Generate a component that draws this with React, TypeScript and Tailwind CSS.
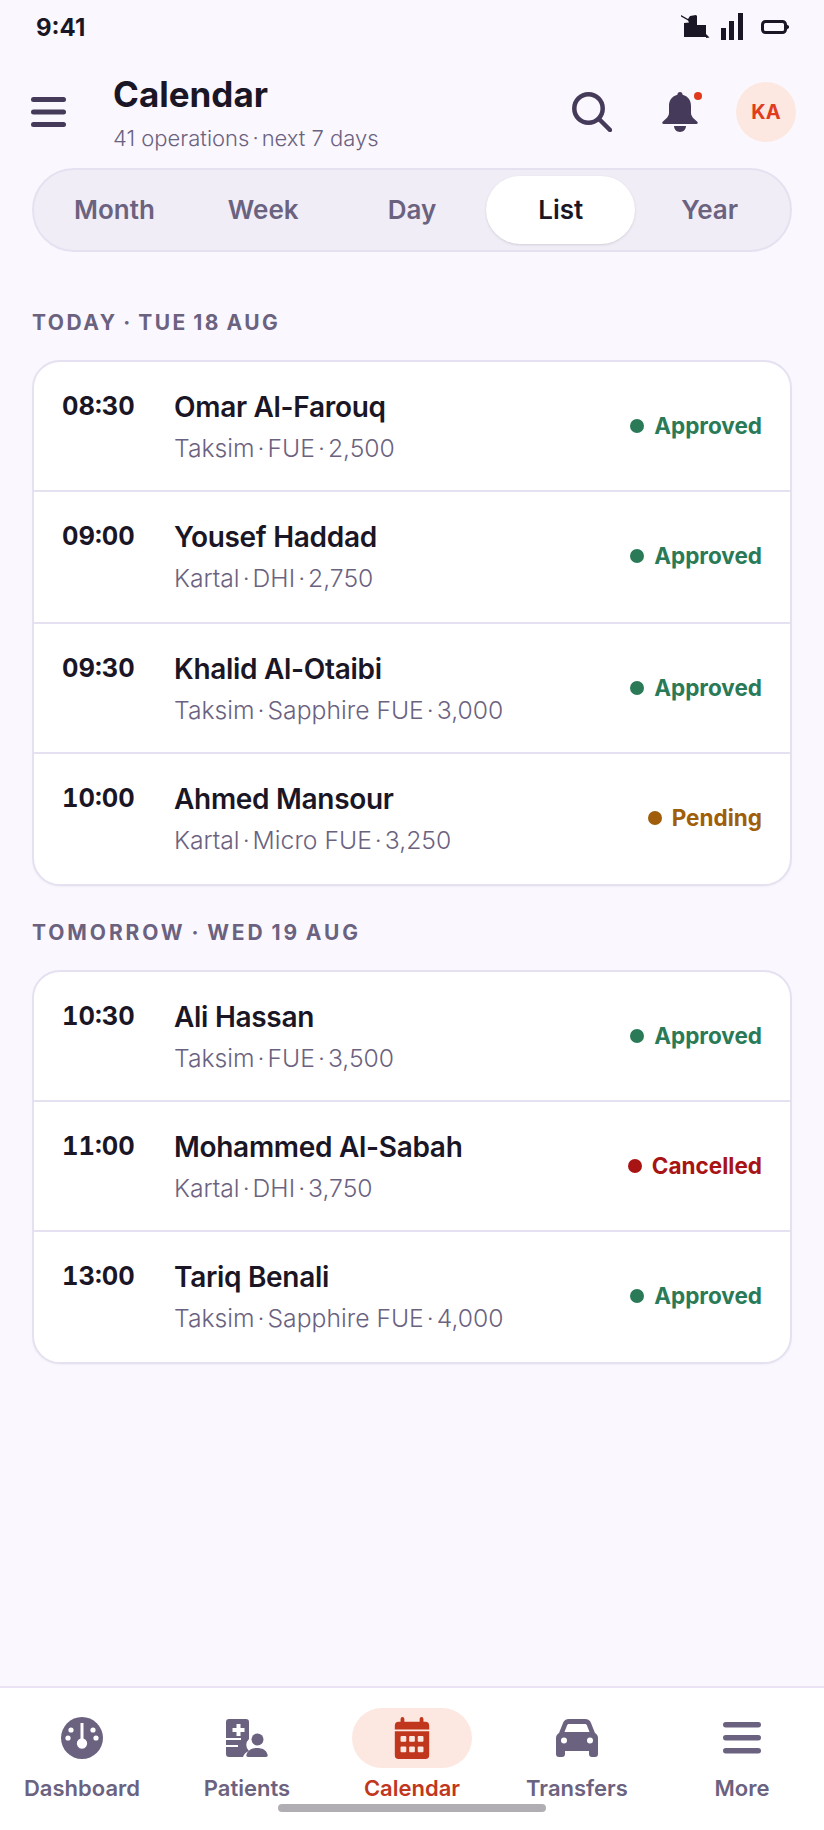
import { Fragment } from "react";

const font = { fontFamily: "Inter, sans-serif" };

type Status = "Approved" | "Pending" | "Cancelled";

const statusStyles: Record<Status, { text: string; dot: string }> = {
  Approved: { text: "text-[#2a7a57]", dot: "bg-[#2a7a57]" },
  Pending: { text: "text-[#a05e0a]", dot: "bg-[#a05e0a]" },
  Cancelled: { text: "text-[#a81313]", dot: "bg-[#a81313]" },
};

const today: { time: string; name: string; sub: string[]; status: Status }[] = [
  { time: "08:30", name: "Omar Al-Farouq", sub: ["Taksim", "FUE", "2,500"], status: "Approved" },
  { time: "09:00", name: "Yousef Haddad", sub: ["Kartal", "DHI", "2,750"], status: "Approved" },
  { time: "09:30", name: "Khalid Al-Otaibi", sub: ["Taksim", "Sapphire FUE", "3,000"], status: "Approved" },
  { time: "10:00", name: "Ahmed Mansour", sub: ["Kartal", "Micro FUE", "3,250"], status: "Pending" },
];

const tomorrow: typeof today = [
  { time: "10:30", name: "Ali Hassan", sub: ["Taksim", "FUE", "3,500"], status: "Approved" },
  { time: "11:00", name: "Mohammed Al-Sabah", sub: ["Kartal", "DHI", "3,750"], status: "Cancelled" },
  { time: "13:00", name: "Tariq Benali", sub: ["Taksim", "Sapphire FUE", "4,000"], status: "Approved" },
];

function StatusIcons() {
  return (
    <div className="flex items-center gap-[11px]">
      <svg width="30" height="26" viewBox="0 0 30 26" className="text-[#1a1625]">
        <path fill="currentColor" d="M1 1l7 4 2-3 6-1 1 1v9h9v12H4V9l5-.5-1-2-7-4z" />
        <path fill="currentColor" d="M26 20l3.500 3.500-3.500.5z" />
      </svg>
      <svg width="22" height="28" viewBox="0 0 22 28" className="text-[#1a1625]">
        <rect x="0" y="15" width="5" height="12" fill="currentColor" />
        <rect x="8" y="8" width="5" height="19" fill="currentColor" />
        <rect x="17" y="0" width="5" height="27" fill="currentColor" />
      </svg>
      <svg width="28" height="14" viewBox="0 0 28 14" className="ml-[7px] text-[#1a1625]">
        <rect x="1.500" y="1.500" width="23" height="11" rx="3" fill="none" stroke="currentColor" strokeWidth="3" />
        <path fill="currentColor" d="M25 4l3 2v2l-3 2z" />
      </svg>
    </div>
  );
}

function Dotted({ parts }: { parts: string[] }) {
  return (
    <>
      {parts.map((p, i) => (
        <Fragment key={p}>
          {i > 0 && <span className="mx-[3px]">·</span>}
          {p}
        </Fragment>
      ))}
    </>
  );
}

function Section({ title, tracking, rows, heights }: { title: string; tracking: string; rows: typeof today; heights: string[] }) {
  return (
    <section>
      <h2 className={`pt-[1px] text-[21px] leading-[27px] font-bold [word-spacing:-2px] text-[#6b6280] ${tracking}`}>{title}</h2>
      <div className="mt-[24px] overflow-hidden rounded-[28px] border-2 border-[#e6e1f0] bg-white shadow-[0_1px_2px_rgba(80,60,120,0.06)]">
        {rows.map((row, i) => (
          <div
            key={row.time}
            className={`flex items-start border-[#e6e1f0] px-[28px] ${heights[i]} ${i < rows.length - 1 ? "border-b-2" : ""}`}
          >
            <div className="mt-[28px] w-[112px] text-[25.500px] leading-[32px] font-bold tabular-nums text-[#1a1625]">{row.time}</div>
            <div className="mt-[27px] flex-1">
              <div className="text-[28px] leading-[36px] font-semibold tracking-[-0.3px] text-[#1a1625]">{row.name}</div>
              <div className="mt-[7px] text-[24.700px] leading-[32px] font-light text-[#6b6280]">
                <Dotted parts={row.sub} />
              </div>
            </div>
            <div className={`mt-[50px] flex items-center gap-[10px] text-[22.500px] leading-[28px] font-bold ${statusStyles[row.status].text}`}>
              <span className={`h-[14px] w-[14px] rounded-full ${statusStyles[row.status].dot}`} />
              {row.status}
            </div>
          </div>
        ))}
      </div>
    </section>
  );
}

function NavItem({ label, active, children }: { label: string; active?: boolean; children: React.ReactNode }) {
  return (
    <div className="flex w-[148px] flex-col items-center">
      <div className={`flex h-[60px] w-[120px] items-center justify-center rounded-full ${active ? "bg-[#fce8e1]" : ""}`}>
        {children}
      </div>
      <div className={`mt-[6px] text-[22px] leading-[28px] font-semibold ${active ? "text-[#c1371d]" : "text-[#6b6280]"}`}>{label}</div>
    </div>
  );
}

export default function App() {
  return (
    <div style={font} className="relative flex h-[1830px] w-[824px] flex-col overflow-hidden bg-[#faf8fe]">
      <div className="flex h-[54px] items-center justify-between pr-[35px] pl-[36px]">
        <span className="mt-[1px] text-[24px] font-bold text-[#1a1625]">9:41</span>
        <StatusIcons />
      </div>

      <header className="flex h-[114px] items-start pr-[28px] pl-[31px]">
        <svg viewBox="0 0 35 30" className="mt-[43px] h-[30px] w-[35px] text-[#453a5a]" fill="currentColor">
          <rect x="0" y="0" width="35" height="5" rx="2.500" />
          <rect x="0" y="12.500" width="35" height="5" rx="2.500" />
          <rect x="0" y="25" width="35" height="5" rx="2.500" />
        </svg>
        <div className="ml-[47px] flex-1">
          <h1 className="mt-[20px] text-[35px] leading-[40px] font-bold text-[#1a1625]">Calendar</h1>
          <p className="mt-[9px] text-[22px] leading-[30px] font-light text-[#6b6280]">
            <Dotted parts={["41 operations", "next 7 days"]} />
          </p>
        </div>
        <svg viewBox="0 0 40 40" className="mt-[38px] h-[40px] w-[40px] text-[#453a5a]" fill="none" stroke="currentColor">
          <circle cx="16.500" cy="16.500" r="14.200" strokeWidth="4.500" />
          <path d="M27.500 27.500L38 38" strokeWidth="4.500" strokeLinecap="round" />
        </svg>
        <div className="relative mt-[38px] ml-[50px] h-[40px] w-[36px]">
          <svg viewBox="0 0 36 40" className="h-[40px] w-[36px] text-[#453a5a]" fill="currentColor">
            <path d="M18 0c1.600 0 2.600 1.200 2.600 2.800C26 4.200 29 8.500 29 14v7c0 3 2 5 6.500 9 .5 1 0 2-1 2H1.500c-1 0-1.500-1-1-2C5 26 7 24 7 21v-7c0-5.500 3-9.800 8.400-11.200C15.400 1.200 16.400 0 18 0zM12 34h12c0 3-2.500 6-6 6s-6-3-6-6z" />
          </svg>
          <span className="absolute top-0 right-[-4px] h-[8px] w-[8px] rounded-full bg-[#e0391c]" />
        </div>
        <div className="mt-[28px] ml-[38px] flex h-[60px] w-[60px] items-center justify-center rounded-full bg-[#fce8e1] text-[20px] font-bold text-[#df3c20]">
          KA
        </div>
      </header>

      <div className="mx-[32px] grid h-[84px] grid-cols-5 items-center rounded-full border-2 border-[#e6e1f0] bg-[#f0edf7] px-[6px]">
        {["Month", "Week", "Day", "List", "Year"].map((t) => (
          <div
            key={t}
            className={`flex h-[68px] items-center justify-center rounded-full pb-[2px] text-[26px] font-semibold ${t === "List" ? "bg-white text-[#1a1625] shadow-sm" : "text-[#6b6280]"}`}
          >
            {t}
          </div>
        ))}
      </div>

      <main className="mt-[56px] flex flex-col gap-[32px] px-[32px]">
        <Section title="TODAY · TUE 18 AUG" tracking="tracking-[2.500px]" rows={today} heights={["h-[130px]", "h-[132px]", "h-[130px]", "h-[130px]"]} />
        <Section title="TOMORROW · WED 19 AUG" tracking="tracking-[2.900px]" rows={tomorrow} heights={["h-[130px]", "h-[130px]", "h-[130px]"]} />
      </main>

      <nav className="absolute right-0 bottom-0 left-0 flex h-[144px] justify-between border-t-2 border-[#e9e3f5] bg-white px-[8px] pt-[20px]">
        <NavItem label="Dashboard">
          <svg viewBox="0 0 44 44" className="h-[44px] w-[44px] text-[#6b6280]">
            <circle cx="22" cy="22" r="21" fill="currentColor" />
            <path d="M20.500 7h3v15.500a5.200 5.200 0 1 1-3 0z" fill="#fff" />
            <circle cx="11" cy="14" r="2.600" fill="#fff" />
            <circle cx="33" cy="14" r="2.600" fill="#fff" />
            <circle cx="8" cy="22" r="2.600" fill="#fff" />
            <circle cx="36" cy="22" r="2.600" fill="#fff" />
          </svg>
        </NavItem>
        <NavItem label="Patients">
          <svg viewBox="0 0 42 38" className="h-[38px] w-[42px] text-[#6b6280]" fill="currentColor">
            <path d="M3 0h17a3 3 0 0 1 3 3v17a8 8 0 0 0 0 12c-3 1-5 3-6 6H3a3 3 0 0 1-3-3V3a3 3 0 0 1 3-3z" />
            <path d="M10.500 5h4v4h4v4h-4v4h-4v-4h-4V9h4zM0 19h15v2H0zM0 26h12v2H0z" fill="#fff" />
            <circle cx="31.500" cy="20.500" r="6" />
            <path d="M22 38c-1.500 0-2-1-1.500-2.500C22 31 26 29 31 29s9.500 2 10.500 6.500c.5 1.500 0 2.500-1.500 2.500z" />
          </svg>
        </NavItem>
        <NavItem label="Calendar" active>
          <svg viewBox="0 0 36 44" className="h-[42px] w-[38px] text-[#c1371d]" fill="currentColor">
            <path d="M8 0a2 2 0 0 1 2 2v3h16V2a2 2 0 0 1 4 0v3h2a4 4 0 0 1 4 4v4H0V9a4 4 0 0 1 4-4h2V2a2 2 0 0 1 2-2zM0 15h36v25a4 4 0 0 1-4 4H4a4 4 0 0 1-4-4z" />
            <g fill="#fce8e1">
              <rect x="6" y="20" width="6" height="6" rx="1" />
              <rect x="15" y="20" width="6" height="6" rx="1" />
              <rect x="24" y="20" width="6" height="6" rx="1" />
              <rect x="6" y="31" width="6" height="6" rx="1" />
              <rect x="15" y="31" width="6" height="6" rx="1" />
              <rect x="24" y="31" width="6" height="6" rx="1" />
            </g>
          </svg>
        </NavItem>
        <NavItem label="Transfers">
          <svg viewBox="0 0 42 38" className="h-[38px] w-[42px] text-[#6b6280]" fill="currentColor">
            <path d="M13 0h16c3 0 5 1.500 6 4l4 10c2 1 3 3 3 5v16a3 3 0 0 1-3 3h-3a3 3 0 0 1-3-3v-3H9v3a3 3 0 0 1-3 3H3a3 3 0 0 1-3-3V19c0-2 1-4 3-5L7 4c1-2.500 3-4 6-4zm0 5c-1 0-1.500.5-2 1.500L8.500 13h25L31 6.500C30.500 5.500 30 5 29 5z" />
            <circle cx="8" cy="21.500" r="3" fill="#fff" />
            <circle cx="34" cy="21.500" r="3" fill="#fff" />
          </svg>
        </NavItem>
        <NavItem label="More">
          <svg viewBox="0 0 38 32" className="h-[32px] w-[38px] text-[#6b6280]" fill="currentColor">
            <rect x="0" y="0" width="38" height="5.500" rx="2.750" />
            <rect x="0" y="13" width="38" height="5.500" rx="2.750" />
            <rect x="0" y="26" width="38" height="5.500" rx="2.750" />
          </svg>
        </NavItem>
      </nav>
      <div className="absolute bottom-[18px] left-[278px] h-[8px] w-[268px] rounded-full bg-[#b0aeb3]" />
    </div>
  );
}
